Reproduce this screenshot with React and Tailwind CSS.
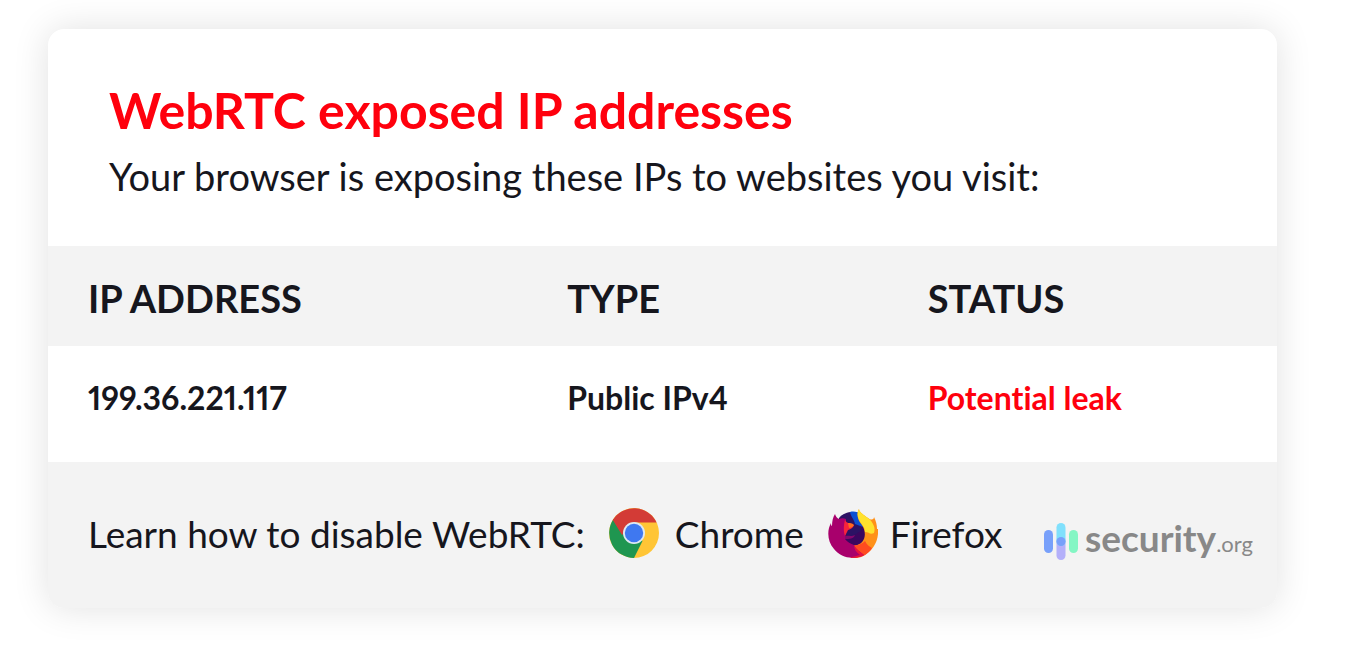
import React from 'react';

const addresses = [
  { ip: '199.36.221.117', type: 'Public IPv4', status: 'Potential leak' },
];

const ChromeIcon = () => (
  <svg viewBox="0 0 50 50" className="size-[50px] shrink-0" aria-hidden="true">
    <circle cx="25" cy="25" r="25" fill="#ffc536" />
    {/* Green sector */}
    <path d="M4.500 11 A25 25 0 0 0 25 50 L33.500 33 L25 25 L14 26 Z" fill="#1f9650" />
    {/* Red sector */}
    <path d="M3.800 12 A25 25 0 0 1 47.600 14.500 H25 L13 27 Z" fill="#d33b36" />
    <circle cx="25" cy="25" r="11" fill="#dfe9f2" />
    <circle cx="25" cy="25" r="9.200" fill="#3f78f0" />
  </svg>
);

const FirefoxIcon = () => (
  <svg viewBox="0 0 50 50" className="size-[50px] shrink-0" aria-hidden="true">
    <circle cx="26" cy="26" r="18" fill="#3a075f" />
    <path d="M11 10 C16 4 24 3 31 5 L34 22 L22 30 L10 20 Z" fill="#2c1264" />
    <path d="M22 4 C26 3 30 4 33 6 L35 19 L27 16 C26 11 23 9 22 4 Z" fill="#0c50d2" />
    <path d="M31 1 C31 4 36 7 40 10 C44 13 46 11 46 9 C48 13 49 17 49 21 L50 21 C51 33 45 43 35 48 C28 51 21 50 17 47 C25 47 29 43 31 40 L26 38 C38 36 39 25 34 17 C30 13 28 6 31 1 Z" fill="#ff9119" />
    <path d="M31 1 C31 4 36 7 40 10 C45 14 48 20 46 25 C42 27 41 24 37 24 C37 19 33 16 31 12 C29 8 29 4 31 1 Z" fill="#ffe22d" />
    <path d="M23 37 C30 38 34 36 37 33 C39 37 42 39 44 40 C39 48 31 51 23 50 Z" fill="#ff4b20" />
    <path d="M7 6 C8 9 9 10 11 11 C13 10 16 10 18 11 C18 14 18 16 18 19 L17 31 C19 34 23 36 26 37 C28 42 33 44 36 47 C25 52 13 50 6 41 C-1 33 -1 22 3 15 C3 18 4 18 4 18 C4 13 5 9 7 6 Z" fill="#a8006c" />
    <path d="M17 12 C19 16 22 15 26 17 C25 20 23 21 20 22 L17 28 C15 22 16 16 17 12 Z" fill="#f8233c" />
    <path d="M20 15 C22 15 24 15 26 17 C25 19 23 20 21 20 Z" fill="#ff6a20" />
    <path d="M26 37 C28 42 33 44 36 47 C32 49 27 50 22 50 C26 48 29 48 32 47 C28 44 26 41 26 37 Z" fill="#e8123f" />
    <path d="M17 28 C20 27 23 29 27 27 C26 31 21 31 17 31 Z" fill="#84086d" />
  </svg>
);

const SecurityMark = () => (
  <svg viewBox="0 0 35 38" className="h-[38px] w-[35px] shrink-0" aria-hidden="true">
    <rect x="0" y="8" width="9" height="23" rx="4.500" fill="#78a0fa" />
    <rect x="12.500" y="14" width="9" height="24" rx="4.500" fill="#b4b0fa" />
    <rect x="12.500" y="1" width="9" height="23" rx="4.500" fill="#80e0fc" />
    <circle cx="17" cy="19.500" r="4.500" fill="#78a0fa" />
    <rect x="25" y="8" width="9" height="23" rx="4.500" fill="#84f6c4" />
  </svg>
);

const App = () => {
  return (
    <main className="bg-white pt-[29px] pb-16 pl-12 pr-[76px] font-['Lato',sans-serif] text-[#16161d] [font-variant-ligatures:no-common-ligatures]">
      <section className="overflow-hidden rounded-2xl bg-white shadow-[0_0_36px_rgba(0,0,0,0.12)]">
        <header className="px-[61px] pt-[53px] pb-[42px]">
          <h1 className="text-[50px] leading-[56px] font-bold text-[#ff000d]">WebRTC exposed IP addresses</h1>
          <p className="mt-2.5 text-[38px] leading-[56px]">
            Your browser is exposing these IPs to websites you visit:
          </p>
        </header>

        <table className="w-full table-fixed text-left">
          <thead className="bg-[#f3f3f3] text-[38px]">
            <tr className="h-[100px]">
              <th className="w-[39%] pt-1 pl-10 font-bold">IP ADDRESS</th>
              <th className="w-[29%] pt-1 pl-10 font-bold">TYPE</th>
              <th className="pt-1 pl-11 font-bold">STATUS</th>
            </tr>
          </thead>
          <tbody className="text-[32px] font-bold proportional-nums">
            {addresses.map((address) => (
              <tr key={address.ip} className="h-[116px]">
                <td className="pb-3 pl-10">{address.ip}</td>
                <td className="pb-3 pl-10">{address.type}</td>
                <td className="pb-3 pl-11 text-[#ff000d]">{address.status}</td>
              </tr>
            ))}
          </tbody>
        </table>

        <footer className="flex items-center justify-between bg-[#f3f3f3] pt-10 pr-6 pb-11 pl-10 text-[37px] leading-[57px]">
          <div className="flex items-center">
            <span>Learn how to disable WebRTC:</span>
            <a href="#chrome" className="ml-6 flex items-center gap-4">
              <ChromeIcon />
              Chrome
            </a>
            <a href="#firefox" className="ml-6 flex items-center gap-3">
              <FirefoxIcon />
              Firefox
            </a>
          </div>
          <a href="#security" className="flex items-center gap-1.5 pt-4 text-[#888888]">
            <SecurityMark />
            <span className="text-[37px] leading-10 font-bold">
              security<span className="text-[22px] font-normal">.org</span>
            </span>
          </a>
        </footer>
      </section>
    </main>
  );
};

export default App;
